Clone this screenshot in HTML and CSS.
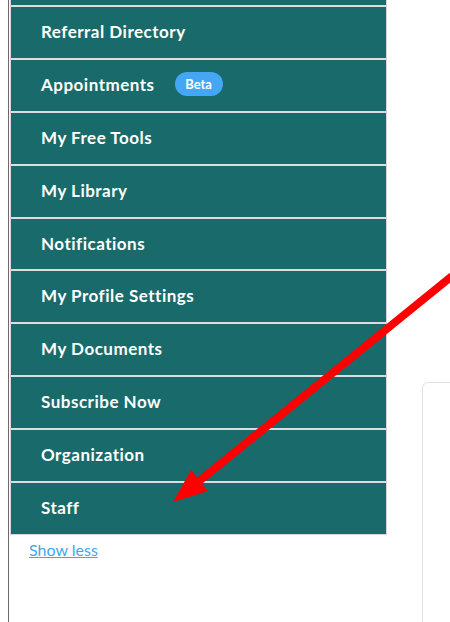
FILE: index.html
```html
<!DOCTYPE html>
<html lang="en">
<head>
<meta charset="utf-8">
<title>Menu</title>
<link rel="stylesheet" href="styles.css">
</head>
<body>
<div class="page">
  <aside class="sidebar">
    <nav class="nav">
      <div class="nav-top"></div>
      <a class="nav-item" href="#">Referral Directory</a>
      <a class="nav-item" href="#">Appointments <span class="badge">Beta</span></a>
      <a class="nav-item" href="#">My Free Tools</a>
      <a class="nav-item" href="#">My Library</a>
      <a class="nav-item" href="#">Notifications</a>
      <a class="nav-item" href="#">My Profile Settings</a>
      <a class="nav-item" href="#">My Documents</a>
      <a class="nav-item" href="#">Subscribe Now</a>
      <a class="nav-item" href="#">Organization</a>
      <a class="nav-item nav-last" href="#">Staff</a>
    </nav>
    <a class="show-less" href="#">Show less</a>
  </aside>
  <main class="main">
    <div class="card"></div>
  </main>
</div>
<svg class="annotation" width="450" height="622" viewBox="0 0 450 622" aria-hidden="true">
  <line x1="452" y1="276" x2="198" y2="482" stroke="#ff0000" stroke-width="8"/>
  <polygon points="173,502 191,470 208,491" fill="#ff0000"/>
</svg>
</body>
</html>
```
FILE: styles.css
```css
html, body {
  margin: 0;
  padding: 0;
  background: #ffffff;
  overflow: hidden;
}
body {
  width: 450px;
  height: 622px;
  position: relative;
  font-family: Lato, "Open Sans", "Liberation Sans", sans-serif;
}
.page {
  display: flex;
  align-items: flex-start;
  height: 622px;
  margin-left: 8px;
  border-left: 1px solid #6a6a6a;
}
.sidebar {
  width: 377px;
  flex: 0 0 377px;
  padding-left: 1px;
  display: flex;
  flex-direction: column;
}
.nav {
  display: flex;
  flex-direction: column;
  border-left: 1px solid #d6d6d6;
  border-right: 1px solid #d6d6d6;
}
.nav-top {
  height: 5px;
  background: #196a6a;
  border-bottom: 2px solid #dcdcdc;
}
.nav-item {
  display: flex;
  align-items: center;
  box-sizing: border-box;
  height: 50.9px;
  padding-left: 30px;
  padding-bottom: 2px;
  background: #196a6a;
  color: #ffffff;
  font-size: 17px;
  font-weight: 700;
  letter-spacing: 0.5px;
  text-decoration: none;
  border-bottom: 2px solid #dcdcdc;
  box-sizing: content-box;
}
.nav-item {
  height: 48.9px;
}
.nav-last {
  border-bottom: 1px solid #d6d6d6;
}
.badge {
  display: inline-flex;
  align-items: center;
  justify-content: center;
  width: 48px;
  height: 24px;
  margin-left: 20px;
  border-radius: 12px;
  background: #45a7f3;
  color: #ffffff;
  font-size: 13px;
  font-weight: 700;
  letter-spacing: 0;
}
.show-less {
  align-self: flex-start;
  margin-top: 5px;
  margin-left: 19px;
  color: #3fa6f2;
  font-size: 16px;
  text-decoration: underline;
}
.main {
  flex: 1 1 auto;
  min-width: 0;
  padding-top: 382px;
  padding-left: 35px;
}
.card {
  height: 239px;
  border: 1px solid #e2e2e2;
  border-right: none;
  border-bottom: none;
  border-top-left-radius: 6px;
}
.annotation {
  position: absolute;
  top: 0;
  left: 0;
  pointer-events: none;
}
```
